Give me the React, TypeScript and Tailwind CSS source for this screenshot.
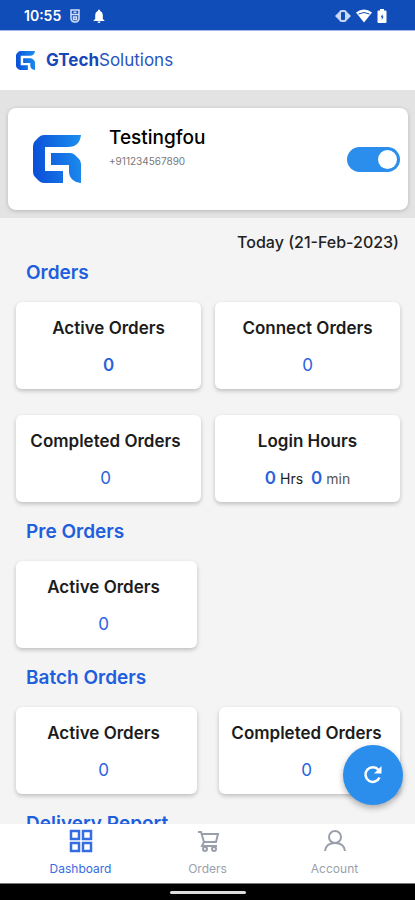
import { useState } from 'react'
import type { ReactNode } from 'react'

function GLogo({ id, className }: { id: string; className: string }) {
  return (
    <svg viewBox="0 0 48 48" className={className} aria-hidden="true">
      <defs>
        <linearGradient id={id} gradientUnits="userSpaceOnUse" x1="0" y1="20" x2="48" y2="14">
          <stop offset="0" stopColor="#0a50d8" />
          <stop offset="1" stopColor="#1c8cee" />
        </linearGradient>
      </defs>
      <g fill={`url(#${id})`}>
        <path d="M11 0H48C47 8 43 12 35 12H12V36H30V48H11Q8 48 6 46L2 42Q0 40 0 37V11Q0 8 2 6L6 2Q8 0 11 0Z" />
        <path d="M18 18H37Q40 18 42 20L46 24Q48 26 48 29V48C40 47 36 43 36 36V30H18Z" />
      </g>
    </svg>
  )
}

function StatusBar() {
  return (
    <div className="flex h-[31px] shrink-0 items-center justify-between border-b border-[#a5b8e6] bg-[#114db9] pt-px pr-7 pl-6 text-white">
      <div className="flex items-center">
        <span className="w-[45px] text-sm font-semibold">10:55</span>
        <svg viewBox="0 0 12 14" className="h-[14px] w-3" fill="none" stroke="#d5dff5" strokeWidth="1.5" aria-hidden="true">
          <path d="M2 1H10V9Q10 13 6 13Q2 13 2 9ZM2 5.500H10M4.500 3.300H7.500M4.500 8H7.500V10.500H4.500Z" />
        </svg>
        <svg viewBox="0 0 12 14" className="ml-3 h-[14px] w-3" fill="#fff" aria-hidden="true">
          <path d="M6 0.500Q7.200 .5 7.200 2Q9.800 3 9.800 6V10L11.500 11.500V12H.5V11.500L2.200 10V6Q2.200 3 4.800 2Q4.800 .5 6 .5ZM4.500 12.500H7.500Q7.300 14 6 14Q4.700 14 4.500 12.500Z" />
        </svg>
      </div>
      <div className="flex items-center gap-[5px]">
        <svg viewBox="0 0 16 12" className="h-3 w-4" aria-hidden="true">
          <path d="M0 6L4 2V10ZM16 6L12 2V10Z" fill="#cbd8f3" />
          <rect x="5" y="1" width="6" height="10" rx="2" fill="none" stroke="#cbd8f3" strokeWidth="2" />
        </svg>
        <svg viewBox="0 0 16 14" className="h-[14px] w-4" aria-hidden="true">
          <path d="M0 3.500Q8-2.500 16 3.500L8 13.500Z" fill="#fff" />
          <path d="M2.500 5Q8 2 13.500 5" fill="none" stroke="#114db9" strokeWidth="1" />
        </svg>
        <svg viewBox="0 0 10 14" className="h-[14px] w-[10px]" aria-hidden="true">
          <path d="M3 0H7V1.500H8.500Q9.500 1.500 9.500 2.500V13Q9.500 14 8.500 14H1.500Q.5 14 .5 13V2.500Q.5 1.500 1.500 1.500H3Z" fill="#fff" />
          <path d="M5.500 5L3.600 8.200H4.800V11L6.600 7.500H5.500Z" fill="#114db9" />
        </svg>
      </div>
    </div>
  )
}

function StatCard({ title, narrow, children }: { title: string; narrow?: boolean; children: ReactNode }) {
  return (
    <div
      className={`flex h-[87px] flex-col items-center rounded-md bg-white pt-[14px] shadow-[0_2px_4px_rgba(0,0,0,0.22)] ${narrow ? 'pr-[6px]' : ''}`}
    >
      <h3 className="text-[17px] leading-6 font-semibold whitespace-nowrap text-[#1c1c1c]">{title}</h3>
      <div className="mt-[13px] text-[17px] leading-6 text-[#2a63dc]">{children}</div>
    </div>
  )
}

function Section({ title, children }: { title: string; children?: ReactNode }) {
  return (
    <section className="pr-[15px] pl-4">
      <h2 className="mb-[17px] pl-[10px] text-[19px] leading-6 font-semibold text-[#1f5fdd]">{title}</h2>
      {children}
    </section>
  )
}

function NavIcon({ children }: { children: ReactNode }) {
  return (
    <svg viewBox="0 0 24 24" className="size-6" fill="none" stroke="currentColor" strokeWidth="2" aria-hidden="true">
      {children}
    </svg>
  )
}

export default function App() {
  const [online, setOnline] = useState(true)

  return (
    <div className="relative flex h-screen flex-col bg-[#f4f4f4] font-['Inter','Liberation_Sans',sans-serif]">
      <StatusBar />

      <header className="flex h-[59px] shrink-0 items-center bg-white pl-4">
        <GLogo id="logo-small" className="size-[19px]" />
        <h1 className="ml-[11px] text-[17px] text-[#2855bd]">
          <span className="font-bold text-[#1747b8]">GTech</span>Solutions
        </h1>
      </header>

      <main className="min-h-0 flex-1 overflow-hidden">
        <div className="bg-[#e3e3e3] pt-[18px] pr-[7px] pb-2 pl-2">
          <div className="flex h-[102px] items-center rounded-lg bg-white pr-2 pl-[25px] shadow-[0_1px_4px_rgba(0,0,0,0.2)]">
            <GLogo id="logo-large" className="size-12" />
            <div className="ml-7 flex-1 self-start pt-4">
              <p className="text-[19px] leading-7 font-medium text-black">Testingfou</p>
              <p className="text-[10px] leading-[18px] text-[#777]">+911234567890</p>
            </div>
            <div className="relative flex">
              <input
                type="checkbox"
                role="switch"
                aria-label="Online"
                checked={online}
                onChange={(e) => setOnline(e.target.checked)}
                className="peer h-[25px] w-[53px] cursor-pointer appearance-none rounded-full bg-gray-300 checked:bg-[#2b8eed]"
              />
              <span className="pointer-events-none absolute top-[3px] left-1 size-[19px] rounded-full bg-white peer-checked:left-[31px]" />
            </div>
          </div>
        </div>

        <p className="mt-3 pr-4 text-right text-base leading-6 font-medium text-[#222]">Today (21-Feb-2023)</p>

        <div className="mt-[7px] flex flex-col gap-[18px]">
          <Section title="Orders">
            <div className="grid grid-cols-2 gap-x-[14px] gap-y-[26px]">
              <StatCard title="Active Orders">
                <span className="font-semibold">0</span>
              </StatCard>
              <StatCard title="Connect Orders">0</StatCard>
              <StatCard title="Completed Orders" narrow>0</StatCard>
              <StatCard title="Login Hours">
                <span className="font-semibold">0</span>
                <span className="ml-1 text-sm text-[#222]">Hrs</span>
                <span className="ml-2 font-semibold">0</span>
                <span className="ml-1 text-sm text-[#555]">min</span>
              </StatCard>
            </div>
          </Section>

          <Section title="Pre Orders">
            <div className="grid grid-cols-2 gap-x-[22px]">
              <StatCard title="Active Orders" narrow>0</StatCard>
            </div>
          </Section>

          <Section title="Batch Orders">
            <div className="grid grid-cols-2 gap-x-[22px]">
              <StatCard title="Active Orders" narrow>0</StatCard>
              <StatCard title="Completed Orders" narrow>0</StatCard>
            </div>
          </Section>

          <Section title="Delivery Report" />
        </div>
      </main>

      <button
        type="button"
        aria-label="Refresh"
        className="absolute right-3 bottom-[95px] flex size-[60px] items-center justify-center rounded-full bg-[#2b8eed] text-white shadow-[0_3px_6px_rgba(0,0,0,0.3)]"
      >
        <svg viewBox="0 0 20 20" className="size-5" fill="none" stroke="currentColor" strokeWidth="2.500" aria-hidden="true">
          <path d="M16.500 12.500A7.300 7.300 0 1 1 15.500 5" />
          <path d="M18.500 1V8.500H11Z" fill="currentColor" stroke="none" />
        </svg>
      </button>

      <nav className="shrink-0 border-b border-[#777] bg-white px-[17px]">
        <ul className="grid h-[59px] grid-cols-3 text-xs leading-5 text-[#9a9fac]">
          <li>
            <a href="#dashboard" className="flex flex-col items-center gap-[6px] pt-[5px] text-[#356ce2]">
              <NavIcon>
                <path d="M2 2H10V10H2ZM14 2H22V10H14ZM2 14H10V22H2ZM14 14H22V22H14Z" strokeWidth="2.500" />
              </NavIcon>
              Dashboard
            </a>
          </li>
          <li>
            <a href="#orders" className="flex flex-col items-center gap-[6px] pt-[5px]">
              <NavIcon>
                <path d="M2 3H5L8 13H20L22 5H6M8 13L6 17H21" />
                <circle cx="9" cy="20" r="2" />
                <circle cx="18" cy="20" r="2" />
              </NavIcon>
              Orders
            </a>
          </li>
          <li>
            <a href="#account" className="flex flex-col items-center gap-[6px] pt-[5px]">
              <NavIcon>
                <circle cx="12" cy="8" r="6" />
                <path d="M2 22Q3 14 12 14T22 22" />
              </NavIcon>
              Account
            </a>
          </li>
        </ul>
      </nav>

      <div className="flex h-4 shrink-0 items-center justify-center bg-black">
        <span className="h-[3px] w-[76px] rounded-full bg-[#ddd]" />
      </div>
    </div>
  )
}
